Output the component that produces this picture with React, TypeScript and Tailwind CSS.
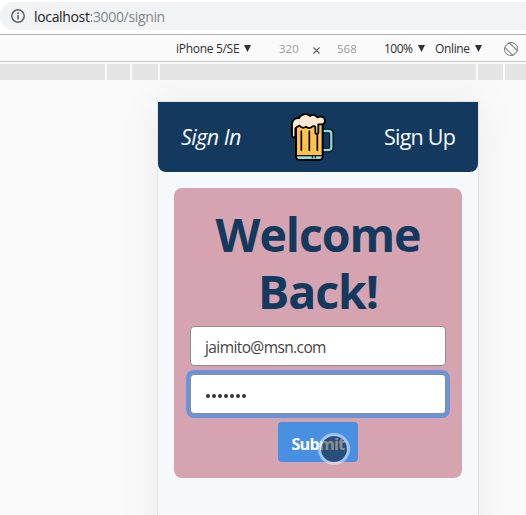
function Beer() {
  return (
    <svg className="h-[50px] w-[44px] shrink-0" viewBox="35 22 132 150" fill="none">
      <path d="M128 79h20q8 0 8 8v41q0 8-8 8h-20" stroke="#000" strokeWidth="14" />
      <path d="M128 79h20q8 0 8 8v41q0 8-8 8h-20" stroke="#80e0e4" strokeWidth="7" />
      <path d="M50 56v97q0 13 12 13h56q12 0 12-13V56z" fill="#fec24f" stroke="#000" strokeWidth="6" />
      <path d="M53 155h74q-1 8-9 8H62q-8 0-9-8z" fill="#80e2e4" />
      <path d="M51 153h78" stroke="#000" strokeWidth="3.5" />
      <path d="M66 80v57M90 80v57M114 92v45" stroke="#000" strokeWidth="5" strokeLinecap="round" />
      <path d="M99 154v7M108 154v7" stroke="#000" strokeWidth="3" />
      <path
        d="M43 98c-4 0-5-3-5-6V59c0-12 9-20 21-19 6-12 24-16 33-6 8-6 18-3 22 4 10-5 23-2 23 10 0 8-5 11-11 11h-9v24c0 7-9 7-9 0V67c-3-5-8-2-12 1-6 4-12 2-16-2-7 6-16 3-19-3-5 2-11 4-13 8v22c0 4-1 5-5 5z"
        fill="#ffe7d2"
        stroke="#000"
        strokeWidth="5.5"
        strokeLinejoin="round"
      />
    </svg>
  );
}

function Caret() {
  return (
    <svg className="h-[7px] w-[7px] shrink-0" viewBox="0 0 7 7">
      <path d="M0 0h7L3.5 7z" fill="#303030" />
    </svg>
  );
}

function BrowserBar() {
  return (
    <div className="h-[35px] border-b border-[#b0b0b0] bg-white pt-[2px]">
      <div className="flex h-7 items-center rounded-l-[14px] bg-[#f1f3f4] pl-[11px]">
        <svg className="mr-[9px] h-[14px] w-[14px]" viewBox="0 0 14 14" fill="none">
          <circle cx="7" cy="7" r="6.2" stroke="#5f6368" strokeWidth="1.5" />
          <path d="M7 6v4.5M7 3.3v1.6" stroke="#5f6368" strokeWidth="1.6" />
        </svg>
        <span className="text-[14px] tracking-[-0.34px] text-[#80868b]">
          <span className="text-[#202124]">localhost</span>:3000/signin
        </span>
      </div>
    </div>
  );
}

function DeviceBar() {
  return (
    <div className="flex h-[27px] items-center border-b border-[#c9c9c9] bg-[#fafafa] pt-px pl-[176px] text-[12px] whitespace-nowrap text-[#303030]">
      <div className="flex w-[103px] items-center gap-[5px]">
        <span className="w-[63px] tracking-[-0.3px]">iPhone 5/SE</span>
        <Caret />
      </div>
      <span className="w-[34px] text-[11.5px] text-[#9b9b9b]">320</span>
      <svg className="mt-[3px] mr-[17px] h-[7px] w-[7px]" viewBox="0 0 7 7">
        <path d="M.5.5l6 6M6.5.5l-6 6" stroke="#63676a" strokeWidth="1.2" />
      </svg>
      <span className="w-[47px] text-[11.5px] text-[#9b9b9b]">568</span>
      <div className="flex w-[51px] items-center gap-[5px]">
        <span className="w-[29px] tracking-[-0.5px]">100%</span>
        <Caret />
      </div>
      <div className="flex w-[69px] items-center gap-[5px]">
        <span className="w-[35px] tracking-[-0.35px]">Online</span>
        <Caret />
      </div>
      <svg className="h-[14px] w-[14px]" viewBox="0 0 14 14" fill="none" stroke="#7c7c7c">
        <rect x="3.7" y="1" width="6.6" height="12" rx="1.2" transform="rotate(-45 7 7)" />
        <path d="M4.6.9A6.5 6.5 0 0 1 13.3 8.7M9.4 13.1A6.5 6.5 0 0 1 .7 5.3" />
      </svg>
    </div>
  );
}

function Ruler() {
  return (
    <div className="flex h-[18px] gap-[2px] bg-[#fafafa] pt-[2px]">
      <div className="w-[105px] bg-[#e5e5e5]" />
      <div className="w-[23px] bg-[#e5e5e5]" />
      <div className="w-[26px] bg-[#e5e5e5]" />
      <div className="w-[316px] bg-[#e5e5e5]" />
      <div className="w-[25px] bg-[#e5e5e5]" />
      <div className="flex-1 bg-[#e5e5e5]" />
    </div>
  );
}

function SignInPage() {
  return (
    <div className="ml-[158px] h-[568px] w-[320px] bg-[#f5f9fc] shadow-[0_0_0_1px_#e4e4e4,0_0_40px_rgba(0,0,0,0.07)]">
      <header className="flex h-[70px] items-center justify-between rounded-b-lg bg-[#14395e] px-[23px] text-[21.5px] text-[#f5f9fc]">
        <a className="w-[110px] pt-px tracking-[-0.55px] italic">Sign In</a>
        <Beer />
        <a className="w-[120px] pt-px text-right tracking-[-0.8px]">Sign Up</a>
      </header>
      <form className="mx-4 mt-4 flex h-[290px] flex-col items-center rounded-lg bg-[#d6a4b0] px-4 pt-[18px]">
        <h1 className="mb-[6px] text-center text-[46.5px] leading-[57px] font-bold tracking-[-1.1px] text-[#14395e]">
          <span className="block">Welcome</span>
          <span className="block">Back!</span>
        </h1>
        <div className="flex h-10 w-full items-center rounded border border-[#8c8c8c] bg-white px-[14px] pt-[3px] text-[15.5px] tracking-[-0.6px] text-[#444]">
          jaimito@msn.com
        </div>
        <div className="mt-2 flex h-10 w-full items-center gap-[2px] rounded border border-[#8c8c8c] bg-white px-[15px] pt-[3px] ring-4 ring-[#6a94da]">
          {Array.from({ length: 7 }, (_, i) => (
            <span key={i} className="h-1 w-1 rounded-full bg-[#333]" />
          ))}
        </div>
        <div className="relative mt-2 flex h-10 w-20 items-center justify-center rounded bg-[#4990e2] pt-[3px] text-[16px] font-bold tracking-[-0.65px] text-white">
          Submit
          <div className="absolute top-[11px] left-10 h-8 w-8 rounded-full border-[3px] border-[#dceafa]/60 bg-black/45 bg-clip-padding" />
        </div>
      </form>
    </div>
  );
}

export default function App() {
  return (
    <div className="h-[515px] w-[526px] overflow-hidden bg-[#fafafa] font-['Open_Sans','Noto_Sans',sans-serif]">
      <BrowserBar />
      <DeviceBar />
      <Ruler />
      <main className="h-[435px] overflow-hidden pt-[22px]">
        <SignInPage />
      </main>
    </div>
  );
}
